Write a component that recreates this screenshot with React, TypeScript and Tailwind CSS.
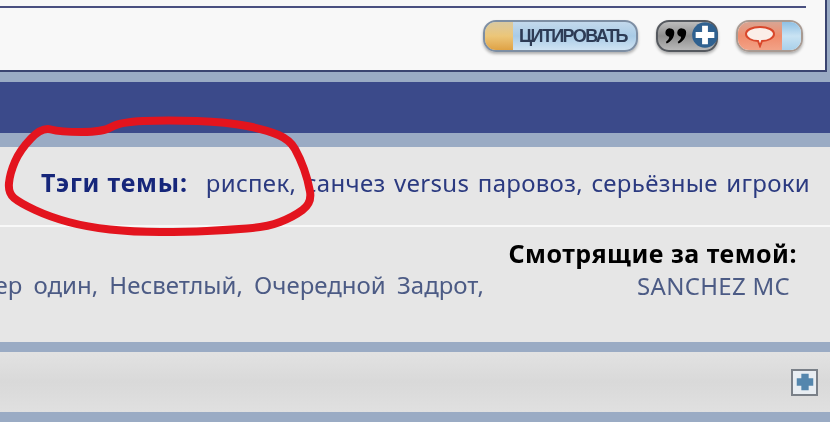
import React from "react";

const font = { fontFamily: '"Noto Sans", sans-serif' };

const circlePoints = [
  [42, 127], [60, 132], [103, 132], [120, 122], [167, 120], [227, 122], [267, 130], [290, 140],
  [300, 158], [308, 180], [312, 203], [293, 217], [267, 227], [227, 230], [187, 232], [133, 232],
  [87, 227], [50, 217], [20, 203], [8, 193], [10, 173], [20, 150],
];

function smoothPath(points: number[][]) {
  const mid = (a: number[], b: number[]) => [(a[0] + b[0]) / 2, (a[1] + b[1]) / 2];
  const start = mid(points[points.length - 1], points[0]);
  let d = `M${start[0]} ${start[1]}`;
  points.forEach((p, i) => {
    const m = mid(p, points[(i + 1) % points.length]);
    d += `Q${p[0]} ${p[1]} ${m[0]} ${m[1]}`;
  });
  return d + "Z";
}

function QuoteButton() {
  return (
    <div className="relative flex h-[32px] w-[155px] items-center overflow-hidden rounded-[13px] border-2 border-[#7d8ea3] bg-gradient-to-b from-[#c3d9ec] via-[#a9cbe6] to-[#cfe3f3] shadow-[0_2px_3px_rgba(0,0,0,0.3)]">
      <div className="h-full w-[28px] shrink-0 bg-gradient-to-b from-[#d9c9a0] via-[#ecc678] to-[#dfa244]" />
      <span className="ml-[6px] text-[18px] leading-none font-bold tracking-[-1.6px] text-[#2d3b55]" style={{ fontFamily: '"Liberation Sans", sans-serif' }}>
        ЦИТИРОВАТЬ
      </span>
    </div>
  );
}

function MultiQuoteButton() {
  return (
    <div className="relative h-[32px] w-[62px]">
      <div className="flex h-full w-full items-center overflow-hidden rounded-[13px] border-2 border-[#55595f] bg-gradient-to-b from-[#bdbdbd] via-[#8e8e8e] to-[#b9b9b9] pl-[7px] shadow-[0_2px_3px_rgba(0,0,0,0.3)]">
        <svg viewBox="0 0 26 18" className="h-[18px] w-[22px]">
          <path d="M6 0a5 5 0 0 1 5 5c0 6-4 11-9 13l-1-2c3-2 4-4 4-6a5 5 0 0 1 1-10z" fill="#000" />
          <path d="M20 0a5 5 0 0 1 5 5c0 6-4 11-9 13l-1-2c3-2 4-4 4-6a5 5 0 0 1 1-10z" fill="#000" />
        </svg>
      </div>
      <svg viewBox="0 0 24 24" className="absolute top-0 right-[-1px] h-[30px] w-[28px]">
        <circle cx="12" cy="12" r="11" fill="#2f6190" />
        <path d="M12 4v16M4 12h16" stroke="#fff" strokeWidth="5" />
      </svg>
    </div>
  );
}

function ReplyButton() {
  return (
    <div className="flex h-[32px] w-[67px] overflow-hidden rounded-[13px] border-2 border-[#a89a92] shadow-[0_2px_3px_rgba(0,0,0,0.3)]">
      <div className="flex w-[44px] items-center justify-center bg-gradient-to-b from-[#d8a593] via-[#f08c6c] to-[#f2a287]">
        <svg viewBox="0 0 34 24" className="h-[24px] w-[34px]">
          <path d="M17 3c8 0 14 3 14 7s-6 7-12 7l-2 5-2-5C9 17 3 14 3 10s6-7 14-7z" fill="#fbeee8" stroke="#d9472b" strokeWidth="2" />
        </svg>
      </div>
      <div className="flex-1 bg-gradient-to-b from-[#8fc0e4] via-[#c9e3f3] to-[#a9d0ea]" />
    </div>
  );
}

export default function App() {
  return (
    <div className="relative h-[422px] w-[830px] overflow-hidden bg-[#9aabc4] blur-[0.6px]" style={font}>
      <div className="mr-[3px] flex h-[72px] flex-col border-r-2 border-b-2 border-[#3a4470] bg-[#f8f8f8]">
        <div className="mt-[6px] h-[2px] w-[806px] bg-[#4a5080]" />
        <div className="mt-[12px] flex items-center justify-end gap-[18px] pr-[22px]">
          <QuoteButton />
          <MultiQuoteButton />
          <ReplyButton />
        </div>
      </div>

      <div className="mt-[10px] h-[51px] bg-[#3b4a8a]" />

      <div className="mt-[14px] flex h-[78px] items-center justify-end bg-[#e6e6e6] pr-[20px] pb-[6px] text-[24px] text-[#2b3a80]">
        <div className="flex items-baseline whitespace-nowrap">
          <span className="mr-[18px] text-[25px] font-bold tracking-[0.8px] text-[#16267a]">Тэги темы:</span>
          <span className="tracking-[0.3px] [word-spacing:2px]">риспек, санчез versus паровоз, серьёзные игроки</span>
        </div>
      </div>
      <div className="h-[2px] bg-[#f8f8f8]" />

      <div className="flex h-[115px] bg-[#e6e6e6]">
        <div className="flex min-w-0 flex-1 justify-end pt-[40px] text-[24px] whitespace-nowrap text-[#4c5b85] [word-spacing:5px]">
          <span>Ровер один, Несветлый, Очередной Задрот,</span>
        </div>
        <div className="flex w-[346px] shrink-0 flex-col items-end pt-[8px] pr-[33px]">
          <span className="text-[25px] leading-[36px] font-bold tracking-[0.5px] whitespace-nowrap text-black">Смотрящие за темой:</span>
          <span className="mt-[-3px] pr-[7px] text-[24px] tracking-[0.3px] text-[#4c5b85]">SANCHEZ MC</span>
        </div>
      </div>

      <div className="mt-[10px] flex h-[60px] items-center justify-end bg-gradient-to-b from-[#e2e2e2] via-[#d9d9d9] to-[#e0e0e0] pr-[12px]">
        <div className="flex h-[27px] w-[27px] items-center justify-center border-2 border-[#7a8088] bg-[#e8edf2]">
          <svg viewBox="0 0 24 24" className="h-[22px] w-[22px]">
            <path d="M12 3v18M3 12h18" stroke="#5486ad" strokeWidth="8" />
          </svg>
        </div>
      </div>

      <svg viewBox="0 0 830 422" className="pointer-events-none absolute inset-0 h-[422px] w-[830px]">
        <path d={smoothPath(circlePoints)} fill="none" stroke="#e3141e" strokeWidth="8" strokeLinejoin="round" />
      </svg>
    </div>
  );
}
